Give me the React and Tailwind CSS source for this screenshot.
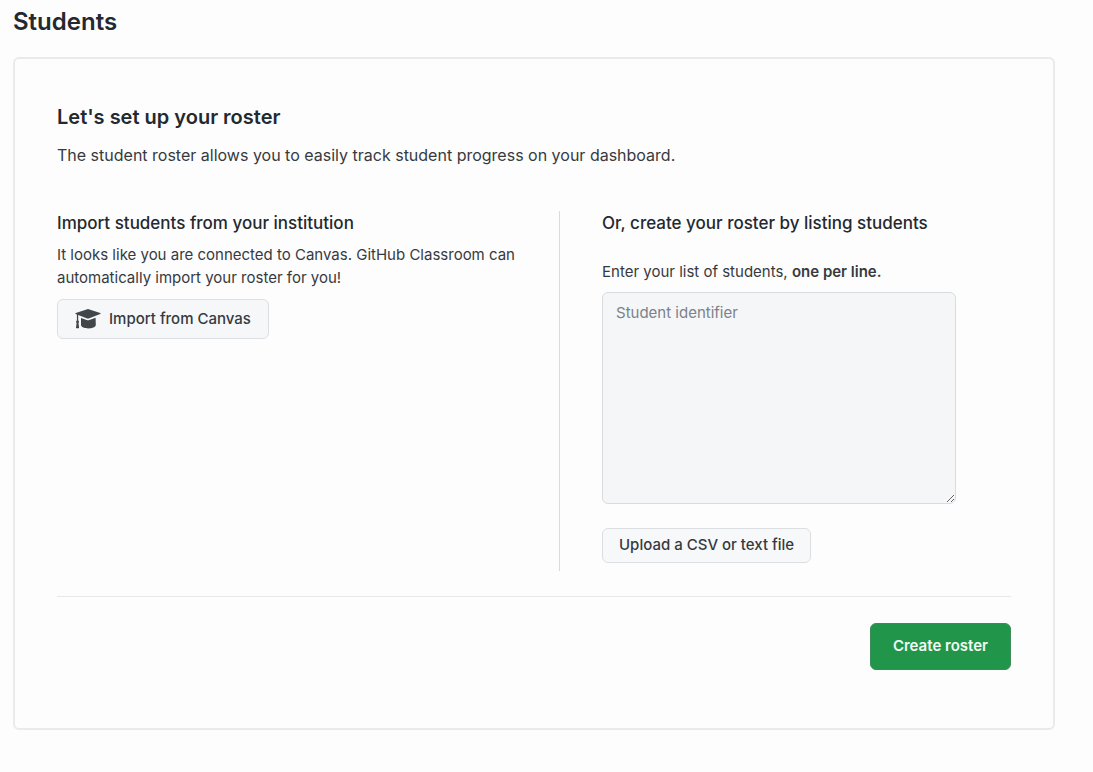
import React from "react";

function CapIcon() {
  return (
    <svg width="26" height="22" viewBox="0 0 26 22" fill="currentColor" className="text-[#41464b]" aria-hidden="true">
      <path d="M12.300 1.200a2.200 2.200 0 0 1 1.400 0l11.500 3.800c.6.200.6.900 0 1.100l-11.500 4.300a2.200 2.200 0 0 1-1.400 0L3.200 7.100v5.400c.5.300.8.700.8 1.300 0 .5-.2.900-.5 1.100l.6 4.800c0 .3-.2.500-.5.500H1.500c-.3 0-.5-.2-.5-.5l.6-4.800c-.3-.2-.5-.6-.5-1.100 0-.6.3-1 .8-1.300V6.600L.8 6.100c-.6-.2-.6-.9 0-1.100z" />
      <path d="M6 10l5.600 2c.9.300 1.900.3 2.800 0l6.200-2.200.2 7.200c0 2-3.400 3.400-7.400 3.400s-7.400-1.400-7.400-3.400z" />
    </svg>
  );
}

export default function App() {
  return (
    <main className="min-h-screen bg-[#fdfdfd] pt-2 pr-[38px] pb-10 pl-[13px] font-['Inter','Liberation_Sans',sans-serif] text-[#24292f]">
      <h1 className="text-2xl leading-7 font-semibold">Students</h1>
      <section className="mt-[21px] rounded-md border-2 border-[#e9eaeb] px-[42px] pt-11 pb-[58px]">
        <h2 className="text-xl leading-7 font-semibold">Let's set up your roster</h2>
        <p className="mt-3 text-base leading-6 text-[#363a3f]">
          The student roster allows you to easily track student progress on your dashboard.
        </p>
        <div className="mt-11 grid grid-cols-[58fr_52fr]">
          <div className="border-r border-[#d9dcdf]">
            <h3 className="text-[17px] leading-6 font-medium">Import students from your institution</h3>
            <p className="mt-2 max-w-[470px] text-[15px] leading-[23px] text-[#363a3f]">
              It looks like you are connected to Canvas. GitHub Classroom can automatically import your roster for you!
            </p>
            <button type="button" className="mt-[10px] flex h-10 items-center gap-2 rounded-md border border-[#dcdfe2] bg-[#f5f7f9] px-[17px] text-[15px] font-medium text-[#363a3f]">
              <CapIcon />
              Import from Canvas
            </button>
          </div>
          <div className="pb-2 pl-[42px]">
            <h3 className="text-[17px] leading-6 font-medium">Or, create your roster by listing students</h3>
            <label htmlFor="students" className="mt-[25px] block text-[15px] leading-6 text-[#363a3f]">
              Enter your list of students, <strong className="font-semibold">one per line.</strong>
            </label>
            <textarea id="students" placeholder="Student identifier" className="mt-2 block h-[212px] w-full max-w-[354px] rounded-md border border-[#d9dcdf] bg-[#f4f6f8] px-[13px] py-2 text-[15px] leading-6 placeholder:text-[#7b8289]" />
            <button type="button" className="mt-6 h-[35px] rounded-md border border-[#dcdfe2] bg-[#f6f8fa] px-4 text-[15px] font-medium text-[#363a3f]">
              Upload a CSV or text file
            </button>
          </div>
        </div>
        <div className="mt-[25px] flex justify-end border-t border-[#e6e8ea] pt-[26px]">
          <button type="button" className="h-[47px] rounded-md border border-[#3b8d57] bg-[#21964a] px-[22px] text-[15px] font-semibold text-[#f0faf3]">
            Create roster
          </button>
        </div>
      </section>
    </main>
  );
}
